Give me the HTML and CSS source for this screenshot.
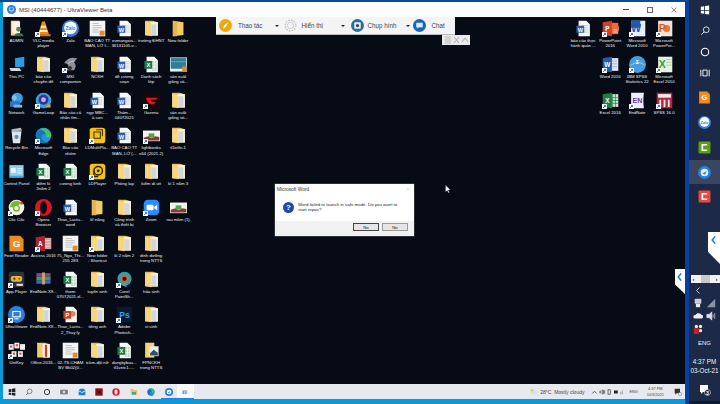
FILE: index.html
```html
<!DOCTYPE html>
<html lang="vi">
<head>
<meta charset="utf-8">
<title>UltraViewer Beta</title>
<link rel="stylesheet" href="styles.css">
</head>
<body>
<svg class="defs" width="0" height="0">
  <defs>
    <symbol id="sc" viewBox="0 0 24 24"><rect x="0" y="17" width="7" height="7" fill="#fff"/><path d="M1.5 22.5l3.5-3.5M2.8 19h2.2v2.2" stroke="#1a5fc0" stroke-width="1.2" fill="none"/></symbol>
    <symbol id="folder" viewBox="0 0 24 24"><path d="M3 1h11l7 2v19H3z" fill="#e8bd5c"/><path d="M10 3h11v19H10z" fill="#f7f3e6"/><path d="M12 6h7v15h-7z" fill="#cfd6de"/><path d="M3 2l9 3v18l-9-2z" fill="#f6d680"/></symbol>
    <symbol id="folderp" viewBox="0 0 24 24"><path d="M4 1h12v21H4z" fill="#f3d27a"/><path d="M6 2h11v17H6z" fill="#f7f3e6"/><circle cx="15" cy="13" r="3.500" fill="#6a7f5a"/><path d="M9 23c0-6 13-6 13 0z" fill="#3f6b4c"/></symbol>
    <symbol id="folderplain" viewBox="0 0 24 24"><path d="M4 1l15 2v18L4 23z" fill="#f1cc6d"/><path d="M4 1l6 2v20l-6 0z" fill="#e3b64f"/></symbol>
    <symbol id="word" viewBox="0 0 24 24"><path d="M5 1h11l5 5v17H5z" fill="#f7f7f7"/><path d="M9 8h10M9 11h10M9 14h10M9 17h10" stroke="#b8c0cc"/><rect x="2" y="8" width="11" height="10" fill="#2b5fb0"/><text x="7.5" y="16.5" class="g8" text-anchor="middle">W</text></symbol>
    <symbol id="excel" viewBox="0 0 24 24"><path d="M5 1h11l5 5v17H5z" fill="#f7f7f7"/><path d="M13 7h6v14h-6z" fill="#b9d9c4"/><path d="M13 11h6M13 15h6M16 7v14" stroke="#fff"/><rect x="2" y="7" width="11" height="11" fill="#1e7a45"/><text x="7.5" y="16" class="g8" text-anchor="middle">X</text></symbol>
    <symbol id="ppt" viewBox="0 0 24 24"><path d="M5 1h11l5 5v17H5z" fill="#f7f7f7"/><circle cx="15" cy="11" r="4" fill="#e0875f"/><rect x="2" y="7" width="11" height="11" fill="#c9442a"/><text x="7.5" y="16" class="g8" text-anchor="middle">P</text></symbol>
    <symbol id="thumb" viewBox="0 0 24 24"><rect x="1" y="1" width="22" height="22" fill="#f4f4f2"/><path d="M5 5h9M5 8h13M5 11h13M5 14h9M5 17h9" stroke="#a9a9a9"/><rect x="15" y="15" width="7" height="7" fill="#dc8d32"/></symbol>
    <symbol id="slide" viewBox="0 0 24 24"><rect x="0" y="2" width="24" height="20" fill="#e9eef2"/><rect x="1" y="3" width="22" height="15" fill="#2f7f96"/><path d="M1 8h22" stroke="#79b8c6"/><rect x="17" y="15" width="7" height="7" fill="#dc8d32"/></symbol>
    <symbol id="vlc" viewBox="0 0 24 24"><path d="M10 2h4l6 19H4z" fill="#f08a12"/><path d="M9 8h6l1 3H8zM7 14h10l1 3H6z" fill="#f6f1e7"/><rect x="2" y="20" width="20" height="3" fill="#d97408"/></symbol>
    <symbol id="zalo" viewBox="0 0 24 24"><circle cx="12" cy="12" r="12" fill="#2f7fe0"/><circle cx="12" cy="11" r="9" fill="#fff"/><text x="12" y="14" class="zalo" text-anchor="middle">Zalo</text></symbol>
    <symbol id="pc" viewBox="0 0 24 24"><path d="M10 3l13-2v14l-13 1z" fill="#2f9be0"/><path d="M2 17h14l3 4H4z" fill="#d5dade"/><path d="M14 16v3" stroke="#aab"/></symbol>
    <symbol id="net" viewBox="0 0 24 24"><circle cx="13" cy="9" r="8" fill="#3f9ede"/><path d="M5 7l5-3 3 5-4 4z" fill="#7cc3ee"/><rect x="3" y="13" width="14" height="8" fill="#2a78c4"/><rect x="8" y="18" width="12" height="4" fill="#77b7e8"/></symbol>
    <symbol id="gloop" viewBox="0 0 24 24"><circle cx="12" cy="12" r="11" fill="#35a5d8"/><circle cx="12" cy="11" r="7" fill="#3b2f8f"/><circle cx="12" cy="11" r="3.5" fill="#bfa8ff"/><path d="M16 20l6-3v5h-6z" fill="#f0a030"/></symbol>
    <symbol id="msi" viewBox="0 0 24 24"><path d="M3 10c5-8 13-9 19-6-3 1-5 3-5 5 3 2 3 7 0 11H6c3-3 4-7 1-9z" fill="#8b9198"/><path d="M8 11c3-3 7-4 11-4" stroke="#dfe3e6" fill="none"/><circle cx="11" cy="17" r="3" fill="#2f3338"/></symbol>
    <symbol id="garena" viewBox="0 0 24 24"><rect width="24" height="24" fill="#17090a"/><path d="M4 8h17l-3 3h-8l3 3h5l-1 2c-4 3-9 1-11-3z" fill="#e8141c"/></symbol>
    <symbol id="recycle" viewBox="0 0 24 24"><path d="M5 6h14l-2 17H7z" fill="#dfe6ea"/><path d="M5 3l13-2 2 4-15 2z" fill="#aeb8be"/><circle cx="12" cy="14" r="3" fill="#5f8fb5"/></symbol>
    <symbol id="edge" viewBox="0 0 24 24"><circle cx="12" cy="12" r="11" fill="#1b9ad8"/><path d="M1 12C2 3 18-1 23 12c-6-4-13-3-14 2 0 4 6 8 10 7-8 5-17-1-18-9z" fill="#1d6fc0"/><path d="M7 3c8-4 16 2 16 9 0 4-7 4-7 1 0-6-5-9-9-10z" fill="#46c06a"/></symbol>
    <symbol id="ldm" viewBox="0 0 24 24"><rect x="1" y="1" width="22" height="22" rx="4" fill="#f3c318"/><path d="M7 7h9v9H7z" fill="none" stroke="#3a3010" stroke-width="1.5"/><path d="M10 4h9v9" fill="none" stroke="#3a3010" stroke-width="1.5"/></symbol>
    <symbol id="ld" viewBox="0 0 24 24"><rect x="1" y="1" width="22" height="22" rx="4" fill="#f3c318"/><circle cx="13" cy="11" r="6" fill="none" stroke="#2e2810" stroke-width="2"/><circle cx="13" cy="11" r="2" fill="#2e2810"/><path d="M7 11v8h6" fill="none" stroke="#2e2810" stroke-width="2"/></symbol>
    <symbol id="cp" viewBox="0 0 24 24"><rect x="2" y="3" width="20" height="16" fill="#8fd0ec"/><rect x="4" y="7" width="7" height="7" fill="#e5f3fa"/><path d="M13 8h7M13 11h7M13 14h7" stroke="#fff"/><rect x="2" y="18" width="20" height="3" fill="#4aa5d0"/></symbol>
    <symbol id="coccoc" viewBox="0 0 24 24"><circle cx="12" cy="12" r="11" fill="#f2f2e8"/><path d="M3 12a9 9 0 0 1 15-7l-5 6z" fill="#74b82e"/><circle cx="12" cy="13" r="4" fill="#fff" stroke="#74b82e" stroke-width="2"/><circle cx="19" cy="6" r="2" fill="#e04a2a"/></symbol>
    <symbol id="opera" viewBox="0 0 24 24"><circle cx="12" cy="12" r="12" fill="#e0141f"/><ellipse cx="12" cy="12" rx="5" ry="9" fill="#0a0d16"/></symbol>
    <symbol id="zoom" viewBox="0 0 24 24"><rect x="1" y="1" width="22" height="22" rx="6" fill="#2d8cff"/><rect x="5" y="8" width="10" height="8" rx="2" fill="#fff"/><path d="M16 11l4-3v8l-4-3z" fill="#fff"/></symbol>
    <symbol id="rau" viewBox="0 0 24 24"><rect x="0" y="5" width="24" height="15" fill="#f2f2ee"/><path d="M1 19h22v-5l-6-1-5 3-4-3-7 2z" fill="#8a3b33"/><rect x="8" y="9" width="8" height="6" fill="#5e9b4c"/></symbol>
    <symbol id="foxit" viewBox="0 0 24 24"><path d="M2 1h15l5 5v17H2z" fill="#ef8a1c"/><text x="12" y="17" class="g13" text-anchor="middle">G</text></symbol>
    <symbol id="access" viewBox="0 0 24 24"><rect x="9" y="4" width="14" height="16" fill="#d9a0a4"/><path d="M12 8h9M12 12h9M12 16h9" stroke="#f2e2e2"/><path d="M1 3l13-2v22L1 21z" fill="#a4272e"/><text x="7.5" y="16" class="g9" text-anchor="middle">A</text></symbol>
    <symbol id="app" viewBox="0 0 24 24"><rect x="1" y="1" width="22" height="22" rx="3" fill="#2d3138"/><rect x="4" y="7" width="16" height="8" rx="3" fill="#e8b92c"/><path d="M7 11h4M9 9v4" stroke="#222"/><circle cx="16" cy="11" r="1.5" fill="#c33"/><rect x="12" y="18" width="9" height="3" fill="#dde"/></symbol>
    <symbol id="rar" viewBox="0 0 24 24"><rect x="2" y="3" width="20" height="5" fill="#8a3fa8"/><rect x="2" y="8" width="20" height="5" fill="#3f9b55"/><rect x="2" y="13" width="20" height="5" fill="#4a62c8"/><rect x="10" y="2" width="4" height="17" fill="#c8a85a"/></symbol>
    <symbol id="corel" viewBox="0 0 24 24"><circle cx="12" cy="11" r="10" fill="#1fa5b8"/><circle cx="12" cy="11" r="6" fill="#e85f2c"/><circle cx="12" cy="11" r="3" fill="#151a20"/><path d="M9 20l4-4 2 7z" fill="#30b0d0"/></symbol>
    <symbol id="uv" viewBox="0 0 24 24"><circle cx="12" cy="12" r="12" fill="#2a7fdc"/><rect x="6" y="7" width="12" height="9" fill="#fff"/><rect x="7.500" y="8.500" width="9" height="6" fill="#2a7fdc"/><path d="M9 18h6" stroke="#fff" stroke-width="1.500"/></symbol>
    <symbol id="ps" viewBox="0 0 24 24"><rect x="1" y="1" width="22" height="22" fill="#061a30"/><text x="12" y="17" class="ps" text-anchor="middle">Ps</text></symbol>
    <symbol id="unikey" viewBox="0 0 24 24"><rect x="1" y="3" width="7" height="8" fill="#f2f2f2"/><rect x="9" y="1" width="7" height="8" fill="#f2f2f2"/><rect x="17" y="3" width="7" height="8" fill="#f2f2f2"/><rect x="5" y="13" width="7" height="8" fill="#f2f2f2"/><rect x="14" y="13" width="7" height="8" fill="#f2f2f2"/><rect x="3" y="5" width="3" height="3" fill="#d64a4a"/><rect x="11" y="3" width="3" height="3" fill="#d64a4a"/><rect x="7" y="15" width="3" height="3" fill="#d64a4a"/><rect x="16" y="15" width="3" height="3" fill="#d64a4a"/></symbol>
    <symbol id="office" viewBox="0 0 24 24"><path d="M3 1h11l7 2v19H3z" fill="#f1cc6d"/><path d="M11 3h10v19H11z" fill="#f7f3e6"/><path d="M14 4h3v17h-3z" fill="#d03a28"/></symbol>
    <symbol id="fpn" viewBox="0 0 24 24"><path d="M3 1h13v21H3z" fill="#f3d27a"/><rect x="9" y="6" width="13" height="14" fill="#e8edf0"/><path d="M10 16l5-5 6 4v4H10z" fill="#39506b"/></symbol>
    <symbol id="w16" viewBox="0 0 24 24"><rect x="9" y="3" width="14" height="18" fill="#dfe7f3"/><path d="M12 7h9M12 11h9M12 15h9" stroke="#7ea0d0"/><path d="M1 3l13-2v22L1 21z" fill="#2a5aa8"/><text x="7.500" y="16" class="g9" text-anchor="middle">W</text></symbol>
    <symbol id="p16" viewBox="0 0 24 24"><circle cx="16" cy="12" r="8" fill="#f08a5a"/><path d="M1 3l13-2v22L1 21z" fill="#cf4326"/><rect x="14" y="4" width="9" height="16" fill="#ee6a3e"/><path d="M16 14h6M16 17h6" stroke="#fff"/><text x="7.500" y="16" class="g9" text-anchor="middle">P</text></symbol>
    <symbol id="w10" viewBox="0 0 24 24"><rect x="3" y="1" width="20" height="22" fill="#e8eef8"/><path d="M3 1h13v10H3z" fill="#1e58b0"/><text x="10" y="17" class="g14 blue" text-anchor="middle">W</text></symbol>
    <symbol id="p10" viewBox="0 0 24 24"><rect x="3" y="1" width="20" height="22" fill="#f6e2d4"/><circle cx="15" cy="12" r="5" fill="#e4793e"/><text x="9" y="17" class="g14 orange" text-anchor="middle">P</text></symbol>
    <symbol id="x10" viewBox="0 0 24 24"><rect x="3" y="1" width="20" height="22" fill="#e6f1e0"/><path d="M14 5h8M14 9h8M14 13h8" stroke="#9cc68a"/><text x="9" y="17" class="g14 green" text-anchor="middle">X</text></symbol>
    <symbol id="ibm" viewBox="0 0 24 24"><circle cx="12" cy="12" r="12" fill="#4a9be0"/><path d="M2 14c6-6 14-6 20-1" stroke="#bfe2f8" fill="none"/><text x="12" y="11" class="g8" text-anchor="middle">Σ</text></symbol>
    <symbol id="x16" viewBox="0 0 24 24"><rect x="12" y="3" width="11" height="18" fill="#cfe6d6"/><path d="M15 3v18M19 3v18M12 8h11M12 12h11M12 16h11" stroke="#1f7c46"/><path d="M1 3l13-2v22L1 21z" fill="#1f7c46"/><text x="7.500" y="16" class="g9" text-anchor="middle">X</text></symbol>
    <symbol id="en" viewBox="0 0 24 24"><path d="M3 1h18c-1 7-1 14 0 22H3z" fill="#f2eef9"/><text x="12" y="16" class="en" text-anchor="middle">EN</text></symbol>
    <symbol id="spss" viewBox="0 0 24 24"><rect x="1" y="1" width="22" height="22" fill="#b3283a"/><rect x="3" y="3" width="18" height="5" fill="#eee"/><path d="M6 11v10M12 11v10M18 11v10" stroke="#eee" stroke-width="2.500"/></symbol>
  </defs>
</svg>

<div class="screen">
  <div class="main">
    <header class="title">
      <div class="title-left">
        <svg class="title-ic" viewBox="0 0 24 24"><use href="#uv"/></svg>
        <span>MSI (40444677) - UltraViewer Beta</span>
      </div>
      <div class="controls">
        <span class="min"></span>
        <span class="max"></span>
        <svg class="close" viewBox="0 0 10 10"><path d="M1 1l8 8M9 1l-8 8" stroke="#333" stroke-width="1"/></svg>
      </div>
    </header>

    <section class="desk">
      <div class="grid grid-left">
        <div class="it"><svg viewBox="0 0 24 24"><use href="#folderp"/></svg><p>ADMIN</p></div>
        <div class="it"><svg viewBox="0 0 24 24"><use href="#vlc"/><use href="#sc"/></svg><p>VLC media player</p></div>
        <div class="it"><svg viewBox="0 0 24 24"><use href="#zalo"/><use href="#sc"/></svg><p>Zalo</p></div>
        <div class="it"><svg viewBox="0 0 24 24"><use href="#thumb"/></svg><p>BÁO CÁO TT MĂN, LỚ I...</p></div>
        <div class="it"><svg viewBox="0 0 24 24"><use href="#word"/></svg><p>evmangxia... 36131105-v...</p></div>
        <div class="it"><svg viewBox="0 0 24 24"><use href="#folder"/></svg><p>trường ĐHNT</p></div>
        <div class="it"><svg viewBox="0 0 24 24"><use href="#folderplain"/></svg><p>New folder</p></div>

        <div class="it"><svg viewBox="0 0 24 24"><use href="#pc"/></svg><p>This PC</p></div>
        <div class="it"><svg viewBox="0 0 24 24"><use href="#folder"/></svg><p>báo cáo chuyên đề</p></div>
        <div class="it"><svg viewBox="0 0 24 24"><use href="#msi"/><use href="#sc"/></svg><p>MSI companion</p></div>
        <div class="it"><svg viewBox="0 0 24 24"><use href="#folder"/></svg><p>NCKH</p></div>
        <div class="it"><svg viewBox="0 0 24 24"><use href="#word"/></svg><p>đề cương soạn</p></div>
        <div class="it"><svg viewBox="0 0 24 24"><use href="#excel"/></svg><p>Danh sách<br>lớp</p></div>
        <div class="it"><svg viewBox="0 0 24 24"><use href="#slide"/></svg><p>sản xuất giống và...</p></div>

        <div class="it"><svg viewBox="0 0 24 24"><use href="#net"/></svg><p>Network</p></div>
        <div class="it"><svg viewBox="0 0 24 24"><use href="#gloop"/><use href="#sc"/></svg><p>GameLoop</p></div>
        <div class="it"><svg viewBox="0 0 24 24"><use href="#folder"/></svg><p>Báo cáo cá nhân tìm...</p></div>
        <div class="it"><svg viewBox="0 0 24 24"><use href="#word"/></svg><p>ngọ MBC... à son</p></div>
        <div class="it"><svg viewBox="0 0 24 24"><use href="#word"/></svg><p>Thám... 04072021</p></div>
        <div class="it"><svg viewBox="0 0 24 24"><use href="#garena"/><use href="#sc"/></svg><p>Garena</p></div>
        <div class="it"><svg viewBox="0 0 24 24"><use href="#folder"/></svg><p>sản xuất giống và...</p></div>

        <div class="it"><svg viewBox="0 0 24 24"><use href="#recycle"/></svg><p>Recycle Bin</p></div>
        <div class="it"><svg viewBox="0 0 24 24"><use href="#edge"/><use href="#sc"/></svg><p>Microsoft Edge</p></div>
        <div class="it"><svg viewBox="0 0 24 24"><use href="#folder"/></svg><p>Báo cáo<br>nhóm</p></div>
        <div class="it"><svg viewBox="0 0 24 24"><use href="#ldm"/><use href="#sc"/></svg><p>LDMultiPla...</p></div>
        <div class="it"><svg viewBox="0 0 24 24"><use href="#word"/></svg><p>BÁO CÁO TT MĂN, LỚ (...</p></div>
        <div class="it"><svg viewBox="0 0 24 24"><use href="#rau"/><use href="#sc"/></svg><p>lightbooks x64 (2021.2)</p></div>
        <div class="it"><svg viewBox="0 0 24 24"><use href="#folder"/></svg><p>tl1etfe-1</p></div>

        <div class="it"><svg viewBox="0 0 24 24"><use href="#cp"/></svg><p>Control Panel</p></div>
        <div class="it"><svg viewBox="0 0 24 24"><use href="#excel"/></svg><p>điểm kì 2năm 2</p></div>
        <div class="it"><svg viewBox="0 0 24 24"><use href="#excel"/></svg><p>cương kinh</p></div>
        <div class="it"><svg viewBox="0 0 24 24"><use href="#ld"/><use href="#sc"/></svg><p>LDPlayer</p></div>
        <div class="it"><svg viewBox="0 0 24 24"><use href="#folder"/></svg><p>Phòng lap</p></div>
        <div class="it"><svg viewBox="0 0 24 24"><use href="#folder"/></svg><p>kiểm di utt</p></div>
        <div class="it"><svg viewBox="0 0 24 24"><use href="#folder"/></svg><p>kì 1 năm 3</p></div>

        <div class="it"><svg viewBox="0 0 24 24"><use href="#coccoc"/><use href="#sc"/></svg><p>Cốc Cốc</p></div>
        <div class="it"><svg viewBox="0 0 24 24"><use href="#opera"/><use href="#sc"/></svg><p>Opera Browser</p></div>
        <div class="it"><svg viewBox="0 0 24 24"><use href="#word"/></svg><p>Thao_Luctu... word</p></div>
        <div class="it"><svg viewBox="0 0 24 24"><use href="#folderplain"/></svg><p>kĩ năng</p></div>
        <div class="it"><svg viewBox="0 0 24 24"><use href="#folder"/></svg><p>Công trình và thiết bị</p></div>
        <div class="it"><svg viewBox="0 0 24 24"><use href="#zoom"/><use href="#sc"/></svg><p>Zoom</p></div>
        <div class="it"><svg viewBox="0 0 24 24"><use href="#rau"/></svg><p>rau mầm (1)</p></div>

        <div class="it"><svg viewBox="0 0 24 24"><use href="#foxit"/></svg><p>Foxit Reader</p></div>
        <div class="it"><svg viewBox="0 0 24 24"><use href="#access"/><use href="#sc"/></svg><p>Access 2016</p></div>
        <div class="it"><svg viewBox="0 0 24 24"><use href="#thumb"/></svg><p>75_Ngo_Thi... 255 283</p></div>
        <div class="it"><svg viewBox="0 0 24 24"><use href="#folder"/><use href="#sc"/></svg><p>New folder - Shortcut</p></div>
        <div class="it"><svg viewBox="0 0 24 24"><use href="#folder"/></svg><p>kì 2 năm 2</p></div>
        <div class="it"><svg viewBox="0 0 24 24"><use href="#folder"/></svg><p>dinh dưỡng trong NTTS</p></div>
        <div class="it"></div>

        <div class="it"><svg viewBox="0 0 24 24"><use href="#app"/><use href="#sc"/></svg><p>App Player</p></div>
        <div class="it"><svg viewBox="0 0 24 24"><use href="#rar"/></svg><p>EndNote.X9...</p></div>
        <div class="it"><svg viewBox="0 0 24 24"><use href="#excel"/></svg><p>thơm 07072021.xl...</p></div>
        <div class="it"><svg viewBox="0 0 24 24"><use href="#folder"/></svg><p>tuyển sinh</p></div>
        <div class="it"><svg viewBox="0 0 24 24"><use href="#corel"/><use href="#sc"/></svg><p>Corel PaintSh...</p></div>
        <div class="it"><svg viewBox="0 0 24 24"><use href="#folder"/></svg><p>hóa sinh</p></div>
        <div class="it"></div>

        <div class="it"><svg viewBox="0 0 24 24"><use href="#uv"/><use href="#sc"/></svg><p>UltraViewer</p></div>
        <div class="it"><svg viewBox="0 0 24 24"><use href="#folder"/></svg><p>EndNote.X9...</p></div>
        <div class="it"><svg viewBox="0 0 24 24"><use href="#ppt"/></svg><p>Thao_Luctu... 2_Thuy ly</p></div>
        <div class="it"><svg viewBox="0 0 24 24"><use href="#folder"/></svg><p>tiếng anh</p></div>
        <div class="it"><svg viewBox="0 0 24 24"><use href="#ps"/><use href="#sc"/></svg><p>Adobe Photosh...</p></div>
        <div class="it"><svg viewBox="0 0 24 24"><use href="#folder"/></svg><p>vi sinh</p></div>
        <div class="it"></div>

        <div class="it"><svg viewBox="0 0 24 24"><use href="#unikey"/><use href="#sc"/></svg><p>UniKey</p></div>
        <div class="it"><svg viewBox="0 0 24 24"><use href="#office"/></svg><p>Office-2016...</p></div>
        <div class="it"><svg viewBox="0 0 24 24"><use href="#thumb"/></svg><p>02-TS-CHAM BV Bk02(0...</p></div>
        <div class="it"><svg viewBox="0 0 24 24"><use href="#folder"/></svg><p>tckm-đội nữ</p></div>
        <div class="it"><svg viewBox="0 0 24 24"><use href="#excel"/></svg><p>dangkybau... tl1vetc1.....</p></div>
        <div class="it"><svg viewBox="0 0 24 24"><use href="#fpn"/></svg><p>FPNCKH trong NTTS</p></div>
        <div class="it"></div>
      </div>

      <div class="grid grid-right">
        <div class="it"><svg viewBox="0 0 24 24"><use href="#word"/></svg><p>báo cáo thực hành quản ...</p></div>
        <div class="it"><svg viewBox="0 0 24 24"><use href="#p16"/><use href="#sc"/></svg><p>PowerPoint 2016</p></div>
        <div class="it"><svg viewBox="0 0 24 24"><use href="#w10"/><use href="#sc"/></svg><p>Microsoft Word 2010</p></div>
        <div class="it"><svg viewBox="0 0 24 24"><use href="#p10"/><use href="#sc"/></svg><p>Microsoft PowerPoi...</p></div>

        <div class="it"></div>
        <div class="it"><svg viewBox="0 0 24 24"><use href="#w16"/><use href="#sc"/></svg><p>Word 2016</p></div>
        <div class="it"><svg viewBox="0 0 24 24"><use href="#ibm"/><use href="#sc"/></svg><p>IBM SPSS Statistics 22</p></div>
        <div class="it"><svg viewBox="0 0 24 24"><use href="#x10"/><use href="#sc"/></svg><p>Microsoft Excel 2010</p></div>

        <div class="it"></div>
        <div class="it"><svg viewBox="0 0 24 24"><use href="#x16"/><use href="#sc"/></svg><p>Excel 2016</p></div>
        <div class="it"><svg viewBox="0 0 24 24"><use href="#en"/><use href="#sc"/></svg><p>EndNote</p></div>
        <div class="it"><svg viewBox="0 0 24 24"><use href="#spss"/><use href="#sc"/></svg><p>SPSS 16.0</p></div>
      </div>

      <div class="toolbar">
        <div class="tool t1">
          <svg viewBox="0 0 24 24"><circle cx="12" cy="12" r="12" fill="#eba80f"/><path d="M7 18l3-7 7-5-4 8z" fill="#fff"/></svg>
          <span>Thao tác</span><i class="caret"></i>
        </div>
        <div class="tool t2">
          <svg viewBox="0 0 24 24"><circle cx="12" cy="12" r="6" fill="none" stroke="#bbb" stroke-width="1.200"/><circle cx="12" cy="12" r="10" fill="none" stroke="#bbb" stroke-width="2" stroke-dasharray="3 2.200"/></svg>
          <span>Hiển thị</span><i class="caret"></i>
        </div>
        <div class="tool t3">
          <svg viewBox="0 0 24 24"><circle cx="12" cy="12" r="12" fill="#2f6d9c"/><rect x="6" y="6" width="12" height="12" rx="2" fill="#e8eef4"/><circle cx="12" cy="12" r="3" fill="#2f4a66"/></svg>
          <span>Chụp hình</span><i class="caret"></i>
        </div>
        <div class="tool t4">
          <svg viewBox="0 0 24 24"><circle cx="12" cy="12" r="12" fill="#1567b8"/><path d="M6 7h12v8h-7l-3 3v-3H6z" fill="#dcebf8"/></svg>
          <span>Chat</span>
        </div>
      </div>
      <div class="mini">
        <svg viewBox="0 0 24 8"><path d="M1 1h6M1 3h6M1 5h6M1 7h6" stroke="#bbb"/><path d="M10 1l5 6M15 1l-5 6" stroke="#aaa"/><path d="M18 6l3-4 3 4" stroke="#aaa" fill="none"/></svg>
      </div>

      <div class="dialog">
        <div class="dlg-title"><span>Microsoft Word</span><svg class="dlg-x" viewBox="0 0 10 10"><path d="M1 1l8 8M9 1l-8 8" stroke="#ccc"/></svg></div>
        <div class="dlg-body">
          <svg viewBox="0 0 24 24"><circle cx="12" cy="12" r="12" fill="#1c4aa8"/><text x="12" y="18" class="q" text-anchor="middle">?</text></svg>
          <p>Word failed to launch in safe mode. Do you want to start repair?</p>
        </div>
        <div class="dlg-foot">
          <button class="btn btn-def">No</button>
          <button class="btn">No</button>
        </div>
      </div>

      <svg class="cursor" viewBox="0 0 12 18"><path d="M1 1v14l3.500-3 2.500 5 2-1-2.500-5H11z" fill="#fff" stroke="#111" stroke-width=".6"/></svg>
      <div class="tab tab-main"><svg viewBox="0 0 10 16"><path d="M7 2L2 8l5 6" stroke="#1a76c8" stroke-width="2.400" fill="none"/></svg></div>
    </section>

    <footer class="taskbar">
      <div class="tb-left">
        <svg class="tb" viewBox="0 0 12 12"><path d="M1 2l4-.6V6H1zM6 1.200L11 .5V6H6zM1 7h4v3.600L1 10zM6 7h5v4.500l-5-.7z" fill="#222"/></svg>
        <svg class="tb" viewBox="0 0 12 12"><circle cx="7" cy="5" r="3.500" fill="none" stroke="#555"/><path d="M4.500 7.500L1.500 10.500" stroke="#555" stroke-width="1.200"/></svg>
        <svg class="tb" viewBox="0 0 12 12"><circle cx="6" cy="6" r="4" fill="none" stroke="#222" stroke-width="1.300"/></svg>
        <svg class="tb" viewBox="0 0 12 12"><path d="M4 3h4v6H4zM1 3h1.500v6H1zM9.500 3H11v6H9.500z" fill="none" stroke="#444"/></svg>
        <svg class="tb" viewBox="0 0 12 12"><path d="M1 4l2-3h6l2 3v7H1z" fill="#1f7fc4"/><path d="M1 5h3l1 2h2l1-2h3" stroke="#fff" fill="none"/></svg>
        <svg class="tb" viewBox="0 0 12 12"><rect x="0.500" y="0.500" width="11" height="11" fill="#8a0f16"/><path d="M3 5h6l-1 3H5z" fill="#1a0606"/></svg>
        <svg class="tb" viewBox="0 0 12 12"><circle cx="6" cy="6" r="5.500" fill="#e2121d"/><ellipse cx="6" cy="6" rx="2.400" ry="4" fill="#eef0f3"/></svg>
        <svg class="tb" viewBox="0 0 12 12"><path d="M1 3h10v7H1z" fill="#f2c441"/><path d="M3 6h6v4H3z" fill="#3d9fd8"/><path d="M1 2h4l1 1H1z" fill="#e0a920"/></svg>
        <svg class="tb" viewBox="0 0 24 24"><use href="#edge"/></svg>
        <span class="tb-run"><svg class="tb" viewBox="0 0 24 24"><circle cx="12" cy="12" r="12" fill="#2a7fdc"/><circle cx="12" cy="12" r="7" fill="#fff"/><path d="M8 14l8-5-3 7z" fill="#2a7fdc"/></svg></span>
        <span class="tb-run tb-act"><svg class="tb" viewBox="0 0 24 24"><use href="#word"/></svg></span>
      </div>
      <div class="tb-right">
        <svg class="wx" viewBox="0 0 14 10"><circle cx="5" cy="4" r="3" fill="#f0cc50"/><path d="M3 9h8a2 2 0 0 0 0-4c-1-2-4-2-5 0a2 2 0 0 0-3 4z" fill="#cfe4f2"/></svg>
        <span class="wx-t">28°C&nbsp; Mostly cloudy</span>
        <svg class="tray-i" viewBox="0 0 44 8"><path d="M1 6l3-3 3 3" stroke="#333" fill="none"/><path d="M11 3h2l2-2v6l-2-2h-2zM16 2v4M17.500 1.500v5" stroke="#333" fill="none" stroke-width=".8"/><rect x="22" y="1" width="3" height="6" fill="none" stroke="#444"/><path d="M30 2h5v4h-5z" fill="#222"/><path d="M41 7V2M39 7V4" stroke="#888"/></svg>
        <span class="eng-s">ENG</span>
        <div class="clock-s"><span>4:37 PM</span><span>10/3/2021</span></div>
        <svg class="note-s" viewBox="0 0 12 12"><path d="M1 1h8v7H4l-2 2V8H1z" fill="#333"/><circle cx="9" cy="9" r="2.500" fill="#e8eaee" stroke="#333" stroke-width=".5"/></svg>
      </div>
    </footer>
  </div>

  <aside class="side">
    <div class="side-top">
      <svg class="s-i s-w" viewBox="0 0 12 12"><path d="M1 2l4-.6V6H1zM6 1.200L11 .5V6H6zM1 7h4v3.600L1 10zM6 7h5v4.500l-5-.7z" fill="#fff"/></svg>
      <svg class="s-i" viewBox="0 0 12 12"><circle cx="7.500" cy="4.500" r="3.500" fill="none" stroke="#fff"/><path d="M5 7L1.500 10.500" stroke="#fff" stroke-width="1.200"/></svg>
      <svg class="s-i" viewBox="0 0 12 12"><circle cx="6" cy="6" r="4.500" fill="none" stroke="#fff" stroke-width="1.300"/></svg>
      <svg class="s-i" viewBox="0 0 12 12"><path d="M3.500 2.500h5v7h-5zM1 2v8M11 2v8" stroke="#fff" fill="none" stroke-width="1.100"/></svg>
      <svg class="s-a s-first" viewBox="0 0 24 24"><use href="#foxit"/></svg>
      <svg class="s-a" viewBox="0 0 24 24"><use href="#zalo"/></svg>
      <svg class="s-a" viewBox="0 0 24 24"><rect x="1" y="1" width="22" height="22" rx="2" fill="#5aa010"/><path d="M17 7H8v10h9" stroke="#fff" stroke-width="3" fill="none"/></svg>
      <div class="s-active"><svg viewBox="0 0 24 24"><circle cx="12" cy="12" r="12" fill="#2a7fdc"/><circle cx="12" cy="12" r="7" fill="#e8f2fc"/><path d="M8 14l8-5-3 7z" fill="#2a7fdc"/></svg></div>
      <svg class="s-a" viewBox="0 0 24 24"><rect x="1" y="1" width="22" height="22" rx="2" fill="#e8493f"/><path d="M17 7H8v10h9" stroke="#fff" stroke-width="3" fill="none"/></svg>
    </div>
    <div class="side-tray">
      <div class="scroll"><i>‹</i><b></b><i>›</i></div>
      <svg class="chev" viewBox="0 0 8 10"><path d="M6 1L2 5l4 4" stroke="#fff" fill="none"/></svg>
      <div class="tray-row">
        <svg viewBox="0 0 12 12"><rect x="2" y="1" width="8" height="6" rx="1" fill="#ccd"/><rect x="3.500" y="7" width="5" height="4" fill="#eee"/></svg>
        <svg viewBox="0 0 12 12"><path d="M1 11L11 1v10z" fill="#8a93a4"/></svg>
      </div>
      <div class="tray-row">
        <svg viewBox="0 0 12 12"><path d="M2 9h8a2.200 2.200 0 0 0 0-4.400C9 2 4 2 3 5a2 2 0 0 0-1 4z" fill="#eef"/></svg>
        <svg viewBox="0 0 12 12"><path d="M1 4h3l3-3v10L4 8H1zM8.500 4v4M10.500 2.500v7" stroke="#dde" fill="#dde" stroke-width=".8"/></svg>
      </div>
      <div class="tray-row tray-one">
        <svg viewBox="0 0 12 12"><circle cx="4" cy="3" r="2" fill="#eee"/><circle cx="9" cy="3" r="2" fill="#eee"/><circle cx="9" cy="8" r="2" fill="#eee"/><rect x="1" y="5" width="6" height="7" fill="#c8202a"/></svg>
      </div>
      <div class="eng">ENG</div>
      <div class="clock"><span>4:37 PM</span><span>03-Oct-21</span></div>
      <svg class="note" viewBox="0 0 12 12"><path d="M1 1h8v7H4l-2 2V8H1z" fill="#fff"/><circle cx="8.500" cy="8.500" r="3" fill="#1c2a47" stroke="#fff" stroke-width=".5"/><text x="8.500" y="10.500" class="nt" text-anchor="middle">3</text></svg>
    </div>
    <div class="tab tab-side"><svg viewBox="0 0 10 16"><path d="M7 2L2 8l5 6" stroke="#1a76c8" stroke-width="2.400" fill="none"/></svg></div>
  </aside>
</div>
</body>
</html>
```
FILE: styles.css
```css
* { box-sizing: border-box; }
html, body { margin: 0; padding: 0; width: 720px; height: 404px; overflow: hidden; background: #0a9ad8; font-family: "Liberation Sans", Arial, sans-serif; }
.defs { position: absolute; }
.screen { display: flex; width: 720px; height: 404px; }

/* remote window */
.main { position: relative; flex: 0 0 689px; height: 404px; display: flex; flex-direction: column; background: #0a9ad8; border-right: 4px solid #0a3fa0; border-top: 2px solid #0a4a92; padding-left: 3px; padding-bottom: 5px; }
.title { flex: 0 0 15px; background: #fff; display: flex; align-items: center; justify-content: space-between; padding-right: 8px; }
.title-left { display: flex; align-items: center; gap: 3px; padding-left: 4px; font-size: 6px; color: #333; }
.title-ic { width: 9px; height: 9px; }
.controls { display: flex; align-items: center; gap: 18px; padding-right: 0; }
.min { width: 6px; height: 1px; background: #444; }
.max { width: 6px; height: 6px; border: 1px solid #666; }
.close { width: 6px; height: 6px; }

.desk { position: relative; flex: 1; background: #060b16; display: flex; justify-content: space-between; align-items: flex-start; overflow: hidden; }
.grid { display: grid; grid-auto-rows: 35.800px; }
.grid-left { grid-template-columns: repeat(7, 26.950px); }
.grid-right { grid-template-columns: repeat(4, 26.950px); margin-right: 7.500px; }
.it { display: flex; flex-direction: column; align-items: center; padding-top: 3px; min-width: 0; }
.it svg { width: 17px; height: 17px; flex: none; }
.it p { margin: 1px 0 0; width: 28px; flex: none; font-size: 4.300px; line-height: 5.300px; color: #f0f2f4; text-align: center; text-wrap: balance; }

.g8 { font: bold 8px "Liberation Sans", sans-serif; fill: #fff; }
.g9 { font: bold 9px "Liberation Sans", sans-serif; fill: #fff; }
.g13 { font: bold 14px "Liberation Sans", sans-serif; fill: #fff; }
.g14 { font: bold 15px "Liberation Sans", sans-serif; }
.blue { fill: #1e58b0; }
.orange { fill: #d2602a; }
.green { fill: #3a9a3a; }
.zalo { font: bold 7px "Liberation Sans", sans-serif; fill: #2f7fe0; }
.ps { font: bold 12px "Liberation Sans", sans-serif; fill: #30a8ff; }
.en { font: bold 10px "Liberation Sans", sans-serif; fill: #6a35a8; }
.q { font: bold 17px "Liberation Sans", sans-serif; fill: #fff; }
.nt { font: bold 5px "Liberation Sans", sans-serif; fill: #fff; }

/* floating toolbar */
.toolbar { position: absolute; left: 213px; top: 0; width: 239px; height: 18px; background: #f4f4f4; border-bottom: 1px solid #bbb; display: flex; align-items: center; font-size: 6.300px; color: #444; }
.tool { display: flex; align-items: center; flex: none; }
.tool svg { width: 13px; height: 13px; flex: none; }
.t1 { width: 67.500px; padding-left: 3px; }
.t2 { width: 66px; }
.t3 { width: 63px; padding-left: 1px; }
.tool span { margin-left: 6px; white-space: nowrap; }
.t1 span { width: 34px; }
.t2 span { width: 36px; margin-left: 5px; }
.t3 span { width: 35px; margin-left: 4px; }
.caret { width: 0; height: 0; margin-left: 3px; border: 2px solid transparent; border-top: 2.500px solid #222; border-bottom: 0; }
.t4 span { margin-left: 6px; }
.mini { position: absolute; left: 439px; top: 18px; width: 28px; height: 10px; background: #eaeaea; padding: 1px 2px; }
.mini svg { display: block; width: 24px; height: 8px; }

/* message box */
.dialog { position: absolute; left: 272px; top: 167px; width: 139px; height: 52px; background: #fff; display: flex; flex-direction: column; box-shadow: 0 0 0 .5px #555; }
.dlg-title { flex: 0 0 10px; display: flex; align-items: center; justify-content: space-between; padding: 0 4px 0 2px; font-size: 4.800px; color: #333; }
.dlg-x { width: 4px; height: 4px; }
.dlg-body { flex: 1; display: flex; align-items: center; padding: 0 8px 1px 8px; gap: 4px; }
.dlg-body svg { width: 11px; height: 11px; flex: none; }
.dlg-body p { margin: 0; font-size: 4.400px; line-height: 5.300px; color: #222; }
.dlg-foot { flex: 0 0 15px; background: #f2f2f2; display: flex; justify-content: flex-end; align-items: center; gap: 3px; padding: 0 6px 3px 0; }
.btn { width: 26px; height: 8px; padding: 0; border: 1px solid #999; background: #e6e6e6; font: 4.400px "Liberation Sans", sans-serif; color: #222; }
.btn-def { border-color: #444; }

.cursor { position: absolute; left: 442px; top: 167px; width: 6px; height: 10px; }
.tab { position: absolute; width: 10px; height: 25px; background: #fff; clip-path: polygon(0 0, 100% 0, 100% 100%, 0 62%); display: flex; align-items: flex-start; justify-content: center; padding-top: 3px; }
.tab svg { width: 6px; height: 10px; }
.tab-main { right: 0; top: 252px; }
.tab-side { right: 0; top: 232px; width: 12px; height: 32px; }

/* bottom taskbar */
.taskbar { flex: 0 0 15px; background: #e7e9ee; display: flex; align-items: center; justify-content: space-between; padding-right: 3px; margin-right: 0; }
.tb-left { display: flex; align-items: center; padding-left: 5px; gap: 9.400px; }
.tb { width: 8px; height: 8px; display: block; }
.tb-run { display: flex; align-items: center; justify-content: center; width: 8px; height: 15px; position: relative; }
.tb-run::after { content: ""; position: absolute; left: -4px; right: -4px; bottom: 0; height: 1px; background: #2a7fdc; }
.tb-act { background: #f8f9fb; width: 17px; margin: 0 -4.500px; }
.tb-act::after { left: 0; right: 0; }
.tb-right { display: flex; align-items: center; font-size: 4.600px; color: #444; }
.wx { width: 9px; height: 7px; margin-right: 2px; }
.wx-t { white-space: nowrap; margin-right: 5px; font-size: 5px; }
.tray-i { width: 38px; height: 6px; margin-right: 2px; }
.eng-s { font-size: 3.800px; margin-right: 9px; }
.clock-s { display: flex; flex-direction: column; align-items: center; font-size: 3.900px; line-height: 6px; margin-right: 10px; }
.note-s { width: 8px; height: 8px; }

/* side taskbar */
.side { position: relative; flex: 0 0 31px; height: 404px; background: #1c2a47; display: flex; flex-direction: column; justify-content: space-between; align-items: center; border-bottom: 3px solid #0d1a33; }
.side-top { width: 100%; display: flex; flex-direction: column; align-items: center; padding-top: 5px; }
.s-i { width: 10px; height: 10px; margin-bottom: 11px; flex: none; }
.s-a { width: 13px; height: 13px; flex: none; margin-bottom: 12px; }
.s-first { margin-top: 2px; }
.s-active { width: 100%; height: 24px; margin: -6px 0 6px; background: #39465f; display: flex; align-items: center; justify-content: center; }
.s-active svg { width: 13px; height: 13px; }
.side-tray { width: 100%; display: flex; flex-direction: column; align-items: center; color: #eef1f6; }
.scroll { width: 29px; height: 8px; background: #f2f2f2; display: flex; align-items: center; justify-content: space-between; padding: 0 2px; color: #333; font: bold 6px/8px "Liberation Sans", sans-serif; margin-left: 1px; }
.scroll i { font-style: normal; }
.scroll b { width: 9px; height: 8px; background: #c9c9c9; }
.chev { align-self: flex-start; margin: 3px 0 0 6px; width: 6px; height: 9px; }
.tray-row { display: flex; gap: 3px; margin-top: 3px; align-self: flex-start; padding-left: 4px; }
.tray-row svg { width: 10px; height: 10px; }
.tray-one { margin-top: 3px; }
.eng { font-size: 6px; margin-top: 6px; }
.clock { display: flex; flex-direction: column; align-items: center; font-size: 6.300px; line-height: 9px; margin-top: 11px; white-space: nowrap; }
.note { width: 12px; height: 12px; margin: 9.500px 0 5px; }
```
